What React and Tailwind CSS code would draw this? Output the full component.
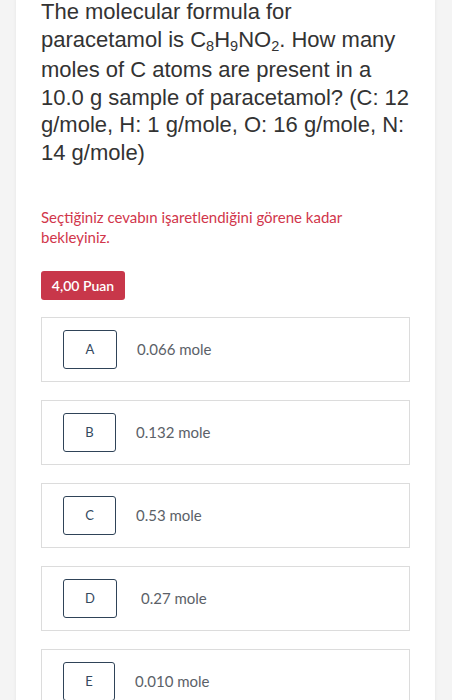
import React from "react";

const options = [
  { l: "A", t: "0.066 mole", w: "w-[54px]", ml: "ml-[20px]" },
  { l: "B", t: "0.132 mole", w: "w-[53px]", ml: "ml-[20px]" },
  { l: "C", t: "0.53 mole", w: "w-[53px]", ml: "ml-[20px]" },
  { l: "D", t: "0.27 mole", w: "w-[54px]", ml: "ml-[24px]" },
  { l: "E", t: "0.010 mole", w: "w-[52px]", ml: "ml-[20px]" },
];

function Sub({ children }) {
  return <span className="relative top-[4px] text-[14.5px]">{children}</span>;
}

export default function App() {
  return (
    <div className="min-h-[700px] bg-[#f4f4f4] overflow-hidden">
      <div className="ml-[16px] w-[419px] bg-white px-[25px] pb-[40px] shadow-[0_0_4px_rgba(0,0,0,0.06)]">
        <div
          className="-mt-[2px] text-[22px] leading-[27.5px] text-[#333333]"
          style={{ fontFamily: '"Liberation Sans", Arial, sans-serif' }}
        >
          The molecular formula for paracetamol is C<Sub>8</Sub>H<Sub>9</Sub>NO<Sub>2</Sub>. How many moles of C atoms are present in a 10.0 g sample of paracetamol? (C: 12 g/mole, H: 1 g/mole, O: 16 g/mole, N: 14 g/mole)
        </div>
        <div style={{ fontFamily: "Lato, sans-serif" }}>
          <p className="mt-[41px] text-[15px] leading-[20px] text-[#d1364b] pr-[40px]">
            Seçtiğiniz cevabın işaretlendiğini görene kadar bekleyiniz.
          </p>
          <div className="mt-[24px] inline-flex h-[29px] w-[84px] items-center justify-center rounded-[3px] bg-[#c8374a] text-[14px] font-semibold text-white">
            4,00 Puan
          </div>
          <div className="mt-[17px] flex flex-col gap-[18px]">
            {options.map((o) => (
              <div
                key={o.l}
                className="flex h-[65px] items-center border border-[#dcdcdc] pl-[21px]"
              >
                <div
                  className={`flex h-[39px] ${o.w} items-center justify-center rounded-[3px] border-[1.5px] border-[#2f4358] text-[13px] text-[#34495e]`}
                >
                  {o.l}
                </div>
                <span className={`${o.ml} text-[15px] text-[#5b6168]`}>{o.t}</span>
              </div>
            ))}
          </div>
        </div>
      </div>
    </div>
  );
}
